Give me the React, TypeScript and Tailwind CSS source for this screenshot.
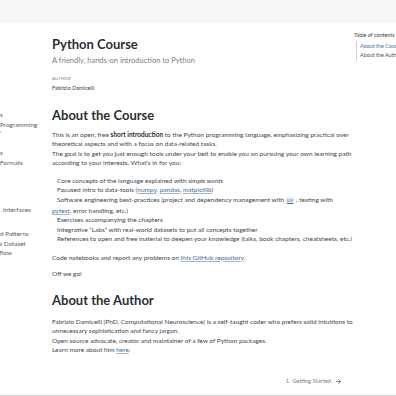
import { ArrowRight } from "lucide-react";

const font = { fontFamily: "Lato, 'Noto Sans', sans-serif" };

function Link({ children }: { children: React.ReactNode }) {
  return <a className="text-[#3f6f9f] underline decoration-[#9fb8d1] underline-offset-1">{children}</a>;
}

// sidebar fragments, the rest of the sidebar is scrolled off to the left
const sidebar = [
  { text: "s", mt: "mt-0", shift: "" },
  { text: "Programming", mt: "mt-0", shift: "" },
  { text: "’", mt: "mt-0", shift: "" },
  { text: "", mt: "mt-0", shift: "" },
  { text: "s", mt: "mt-0", shift: "" },
  { text: "Formats", mt: "mt-0", shift: "" },
  { text: "", mt: "mt-0", shift: "" },
  { text: "", mt: "mt-0", shift: "" },
  { text: "", mt: "mt-0", shift: "" },
  { text: "", mt: "mt-0", shift: "" },
  { text: "Interfaces", mt: "mt-0", shift: "pl-[3px]" },
  { text: "", mt: "mt-0", shift: "" },
  { text: "d Patterns", mt: "mt-[5px]", shift: "" },
  { text: "a Dataset", mt: "mt-0", shift: "-ml-[1px]" },
  { text: "rflow", mt: "mt-0", shift: "-ml-[3px]" },
];

const items = [
  <>Core concepts of the language explained with <em>simple words</em></>,
  <>Focused intro to data-tools (<Link>numpy</Link>, <Link>pandas</Link>, <Link>matplotlib</Link>)</>,
  <>
    Software engineering best-practices (project and dependency management with{" "}
    <code className="rounded-[1px] bg-[#eef2f6] px-[1px] text-[5.5px] text-[#3f6f9f] underline">uv</code> , testing with
    <br />
    <Link>pytest</Link>, error handling, etc.)
  </>,
  <>Exercises accompanying the chapters</>,
  <>Integrative “Labs” with real-world datasets to put all concepts together</>,
  <>References to open and free material to deepen your knowledge (talks, book chapters, cheatsheets, etc.)</>,
];

export default function App() {
  return (
    <div className="h-[396px] w-[396px] overflow-hidden bg-white text-[#43484e]" style={font}>
      <div className="h-[22px] border-b border-[#eceef0] bg-[#f6f7f8]" />

      <div className="flex h-[374px] border-b border-[#d4d6d8]">
        {/* Sidebar */}
        <nav className="w-[52px] flex-none whitespace-nowrap pt-[88px] text-[6.4px] leading-[9.5px] text-[#565b62]">
          {sidebar.map((s, i) => (
            <div key={i} className={`h-[9.5px] ${s.mt} ${s.shift}`}>
              {s.text}
            </div>
          ))}
        </nav>

        {/* Main */}
        <main className="w-[300px] flex-none whitespace-nowrap pt-[13.5px]">
          <h1 className="text-[13px] leading-[17px] font-bold text-[#2b2f33]">Python Course</h1>
          <p className="mt-[3px] text-[7.5px] leading-[10px] text-[#7a8087]">A friendly, hands-on introduction to Python</p>
          <div className="mt-[10.5px] text-[4.5px] leading-[6px] uppercase text-[#858a90]">Author</div>
          <div className="mt-[1.7px] text-[5.5px] leading-[8px] text-[#3a3e43]">Fabrizio Damicelli</div>

          <h2 className="mt-[15px] text-[13px] leading-[16px] font-bold text-[#2b2f33]">About the Course</h2>
          <p className="mt-[7.3px] text-[6.5px] leading-[9.3px]">
            This is an open, free <strong className="text-[#2b2f33]">short introduction</strong> to the Python programming language, emphasizing practical over
            <br />
            theoretical aspects and with a focus on data-related tasks.
            <br />
            The goal is to get you just enough tools under your belt to enable you on pursuing your own learning path
            <br />
            according to your interests. What’s in for you:
          </p>
          <ul className="mt-[8.7px] text-[6.5px] leading-[9.6px]">
            {items.map((it, i) => (
              <li key={i} className="indent-[5px]">
                {it}
              </li>
            ))}
          </ul>
          <p className="mt-[8.6px] text-[6.5px] leading-[9.3px]">
            Code notebooks and report any problems on <Link>this GitHub repository</Link>.
          </p>
          <p className="mt-[7px] text-[6.5px] leading-[9.3px]">Off we go!</p>

          <h2 className="mt-[14px] text-[13px] leading-[16px] font-bold text-[#2b2f33]">About the Author</h2>
          <p className="mt-[9px] text-[6.5px] leading-[9.2px]">
            Fabrizio Damicelli (PhD, Computational Neuroscience) is a self-taught coder who prefers solid intuitions to
            <br />
            unnecessary sophistication and fancy jargon.
            <br />
            Open source advocate, creator and maintainer of a few of Python packages.
            <br />
            Learn more about him <Link>here</Link>.
          </p>

          <div className="mt-[23px] flex items-center justify-end gap-[4px] pr-[10px] text-[5.8px] leading-[8px] text-[#7a8087]">
            <span>1&nbsp; Getting Started</span>
            <ArrowRight className="h-[7px] w-[7px] text-[#4a4f55]" strokeWidth={2.2} />
          </div>
        </main>

        {/* Table of contents */}
        <aside className="flex-1 whitespace-nowrap pl-[2px] pt-[9.5px] text-[5.4px] leading-[7px]">
          <div className="text-[#3a3e43]">Table of contents</div>
          <div className="mt-[2px] ml-[2px] border-l border-[#cfd3d7] py-[1px] pl-[3px]">
            <div className="leading-[9px] text-[#3f6f9f]">About the Course</div>
            <div className="leading-[9px] text-[#4a4f55]">About the Author</div>
          </div>
        </aside>
      </div>
    </div>
  );
}
